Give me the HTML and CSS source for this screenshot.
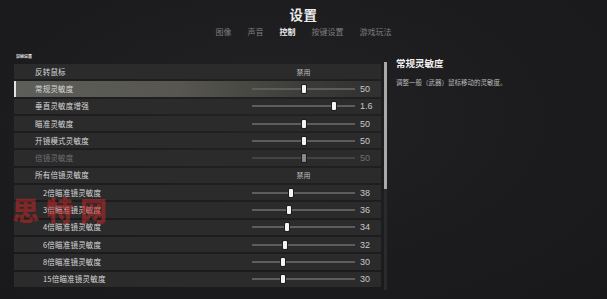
FILE: index.html
```html
<!DOCTYPE html>
<html lang="zh-CN">
<head>
<meta charset="utf-8">
<title>设置</title>
<link rel="stylesheet" href="styles.css">
</head>
<body>
<div class="screen">
  <header class="top">
    <h1 class="title">设置</h1>
    <nav class="tabs">
      <span class="tab">图像</span>
      <span class="tab">声音</span>
      <span class="tab active">控制</span>
      <span class="tab">按键设置</span>
      <span class="tab">游戏玩法</span>
    </nav>
  </header>
  <main class="main">
    <section class="list-pane">
      <div class="pane-label"><span>鼠标设置</span></div>
      <div class="rows">
        <div class="row"><span class="label">反转鼠标</span><span class="toggle">禁用</span><span class="value"></span></div>
        <div class="row selected"><span class="label">常规灵敏度</span><span class="slider"><span class="thumb" style="left:50%"></span></span><span class="value">50</span></div>
        <div class="row"><span class="label">垂直灵敏度增强</span><span class="slider"><span class="thumb" style="left:80%"></span></span><span class="value">1.6</span></div>
        <div class="row"><span class="label">瞄准灵敏度</span><span class="slider"><span class="thumb" style="left:50%"></span></span><span class="value">50</span></div>
        <div class="row"><span class="label">开镜模式灵敏度</span><span class="slider"><span class="thumb" style="left:50%"></span></span><span class="value">50</span></div>
        <div class="row disabled"><span class="label">倍镜灵敏度</span><span class="slider"><span class="thumb" style="left:50%"></span></span><span class="value">50</span></div>
        <div class="row"><span class="label">所有倍镜灵敏度</span><span class="toggle">禁用</span><span class="value"></span></div>
        <div class="row sub"><span class="label">2倍瞄准镜灵敏度</span><span class="slider"><span class="thumb" style="left:38%"></span></span><span class="value">38</span></div>
        <div class="row sub"><span class="label">3倍瞄准镜灵敏度</span><span class="slider"><span class="thumb" style="left:36%"></span></span><span class="value">36</span></div>
        <div class="row sub"><span class="label">4倍瞄准镜灵敏度</span><span class="slider"><span class="thumb" style="left:34%"></span></span><span class="value">34</span></div>
        <div class="row sub"><span class="label">6倍瞄准镜灵敏度</span><span class="slider"><span class="thumb" style="left:32%"></span></span><span class="value">32</span></div>
        <div class="row sub"><span class="label">8倍瞄准镜灵敏度</span><span class="slider"><span class="thumb" style="left:30%"></span></span><span class="value">30</span></div>
        <div class="row sub"><span class="label">15倍瞄准镜灵敏度</span><span class="slider"><span class="thumb" style="left:30%"></span></span><span class="value">30</span></div>
      </div>
    </section>
    <div class="scrollbar"><div class="scroll-thumb"></div></div>
    <aside class="detail">
      <h2 class="detail-title">常规灵敏度</h2>
      <p class="detail-text">调整一般（武器）鼠标移动的灵敏度。</p>
    </aside>
  </main>
  <div class="watermark">思特网</div>
</div>
</body>
</html>
```

FILE: styles.css
```css
* { box-sizing: border-box; margin: 0; padding: 0; }

html, body {
  width: 607px;
  height: 299px;
  overflow: hidden;
}

body {
  background: #1c1c1e;
  font-family: "Noto Sans CJK SC", "Noto Sans", sans-serif;
  color: #d4d4d4;
}

.screen {
  position: relative;
  width: 607px;
  height: 299px;
  background: radial-gradient(ellipse at 45% 40%, #222224 0%, #1c1c1e 55%, #18181a 100%);
}

.top {
  display: flex;
  flex-direction: column;
  align-items: center;
  padding-top: 5px;
}

.title {
  font-size: 13.5px;
  line-height: 18px;
  font-weight: 700;
  color: #ececec;
  letter-spacing: 0.5px;
}

.tabs {
  display: flex;
  gap: 16px;
  margin-top: 3px;
  font-size: 8px;
  line-height: 12px;
}

.tab {
  color: #7d7d7d;
}

.tab.active {
  color: #f0f0f0;
  font-weight: 700;
}

.main {
  display: flex;
  margin-top: 11px;
}

.list-pane {
  margin-left: 14px;
  width: 367px;
}

.pane-label {
  height: 15px;
  display: flex;
  align-items: flex-end;
  padding-left: 2px;
  padding-bottom: 6px;
}

.pane-label span {
  font-size: 4px;
  line-height: 4px;
  font-weight: 700;
  color: #e8e8e8;
}

.rows {
  display: flex;
  flex-direction: column;
  gap: 2px;
}

.row {
  height: 15.3px;
  display: grid;
  grid-template-columns: 1fr 103px 26px;
  align-items: center;
  padding-left: 21px;
  background: #2b2b2c;
  font-size: 7.5px;
  line-height: 10px;
}

.row.sub {
  padding-left: 29px;
}

.row.selected {
  background: linear-gradient(to right, #5d5d5a 0%, #57574f 45%, #3b3b39 80%, #303030 100%);
  box-shadow: inset 2px 0 0 #e2e2e2;
}

.label {
  color: #d8d8d8;
  white-space: nowrap;
  letter-spacing: 0.2px;
}

.row.disabled .label,
.row.disabled .value {
  color: #6f6f6f;
}

.toggle {
  text-align: center;
  color: #bdbdbd;
  font-size: 7px;
}

.slider {
  position: relative;
  height: 2px;
  background: #5d5d5d;
}

.thumb {
  position: absolute;
  top: -3px;
  width: 4px;
  height: 8px;
  margin-left: -2px;
  background: #f4f4f4;
  border-radius: 1px;
  box-shadow: 0 0 0 1px #1e1e1e;
}

.row.disabled .slider { background: #444; }
.row.disabled .thumb { background: #8a8a8a; }

.value {
  padding-left: 5px;
  font-family: "Liberation Sans", "Noto Sans", sans-serif;
  font-size: 9px;
  color: #c8c8c8;
}

.scrollbar {
  margin-left: 3px;
  margin-top: 13px;
  width: 3px;
  height: 228px;
  background: #2a2a2b;
}

.scroll-thumb {
  height: 127px;
  background: #a9a9a9;
}

.detail {
  margin-left: 9px;
  padding-top: 8px;
}

.detail-title {
  font-size: 9.5px;
  line-height: 12px;
  font-weight: 700;
  color: #f2f2f2;
}

.detail-text {
  margin-top: 9px;
  font-size: 6.5px;
  line-height: 9px;
  color: #bcbcbc;
}

.watermark {
  position: absolute;
  left: 12px;
  top: 194px;
  font-size: 27px;
  line-height: 32px;
  font-weight: 900;
  letter-spacing: 7px;
  color: rgba(185, 38, 38, 0.6);
}
```
